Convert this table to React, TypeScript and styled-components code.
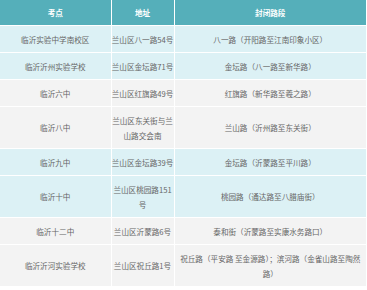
import { createGlobalStyle, styled } from 'styled-components';

const GlobalStyle = createGlobalStyle`
    html, body {
        margin: 0;
        padding: 0;
        background: #ffffff;
    }
    body {
        font-family: 'Noto Sans CJK SC', 'Microsoft YaHei', sans-serif;
    }
`;

const Table = styled.table`
    width: 367px;
    border-collapse: collapse;
    table-layout: fixed;
    font-size: 7.6px;
    line-height: 15px;
    color: #666666;
`;

const HeadCell = styled.th`
    background: #55afba;
    color: #ffffff;
    font-weight: bold;
    text-align: center;
    padding: 5px 0;
    border: 1px solid #ffffff;
    border-top: none;
    &:first-child {
        border-left: none;
    }
`;

const Row = styled.tr<{ $tint: boolean }>`
    background: ${(p) => (p.$tint ? '#dcf1f5' : '#f3f3f3')};
`;

const Cell = styled.td`
    text-align: center;
    vertical-align: middle;
    padding: 5.5px 0;
    border: 1px solid #ffffff;
    word-break: break-all;
    &:first-child {
        border-left: none;
    }
`;

type Site = {
    school: string;
    address: string;
    road: string;
};

const sites: Site[] = [
    { school: '临沂实验中学南校区', address: '兰山区八一路54号', road: '八一路（开阳路至江南印象小区）' },
    { school: '临沂沂州实验学校', address: '兰山区金坛路71号', road: '金坛路（八一路至新华路）' },
    { school: '临沂六中', address: '兰山区红旗路49号', road: '红旗路（新华路至羲之路）' },
    { school: '临沂八中', address: '兰山区东关街与兰山路交会南', road: '兰山路（沂州路至东关街）' },
    { school: '临沂九中', address: '兰山区金坛路39号', road: '金坛路（沂蒙路至平川路）' },
    { school: '临沂十中', address: '兰山区桃园路151号', road: '桃园路（通达路至八腊庙街）' },
    { school: '临沂十二中', address: '兰山区沂蒙路6号', road: '泰和街（沂蒙路至实康水务路口）' },
    {
        school: '临沂沂河实验学校',
        address: '兰山区祝丘路1号',
        road: '祝丘路（平安路 至金源路）；滨河路（金雀山路至陶然路）',
    },
];

const App = () => {
    return (
        <>
            <GlobalStyle />
            <Table>
                <colgroup>
                    <col style={{ width: 111 }} />
                    <col style={{ width: 63 }} />
                    <col />
                </colgroup>
                <thead>
                    <tr>
                        <HeadCell>考点</HeadCell>
                        <HeadCell>地址</HeadCell>
                        <HeadCell>封闭路段</HeadCell>
                    </tr>
                </thead>
                <tbody>
                    {sites.map((s, i) => (
                        <Row key={s.school} $tint={i % 4 < 2}>
                            <Cell>{s.school}</Cell>
                            <Cell>{s.address}</Cell>
                            <Cell>{s.road}</Cell>
                        </Row>
                    ))}
                </tbody>
            </Table>
        </>
    );
};

export default App;
